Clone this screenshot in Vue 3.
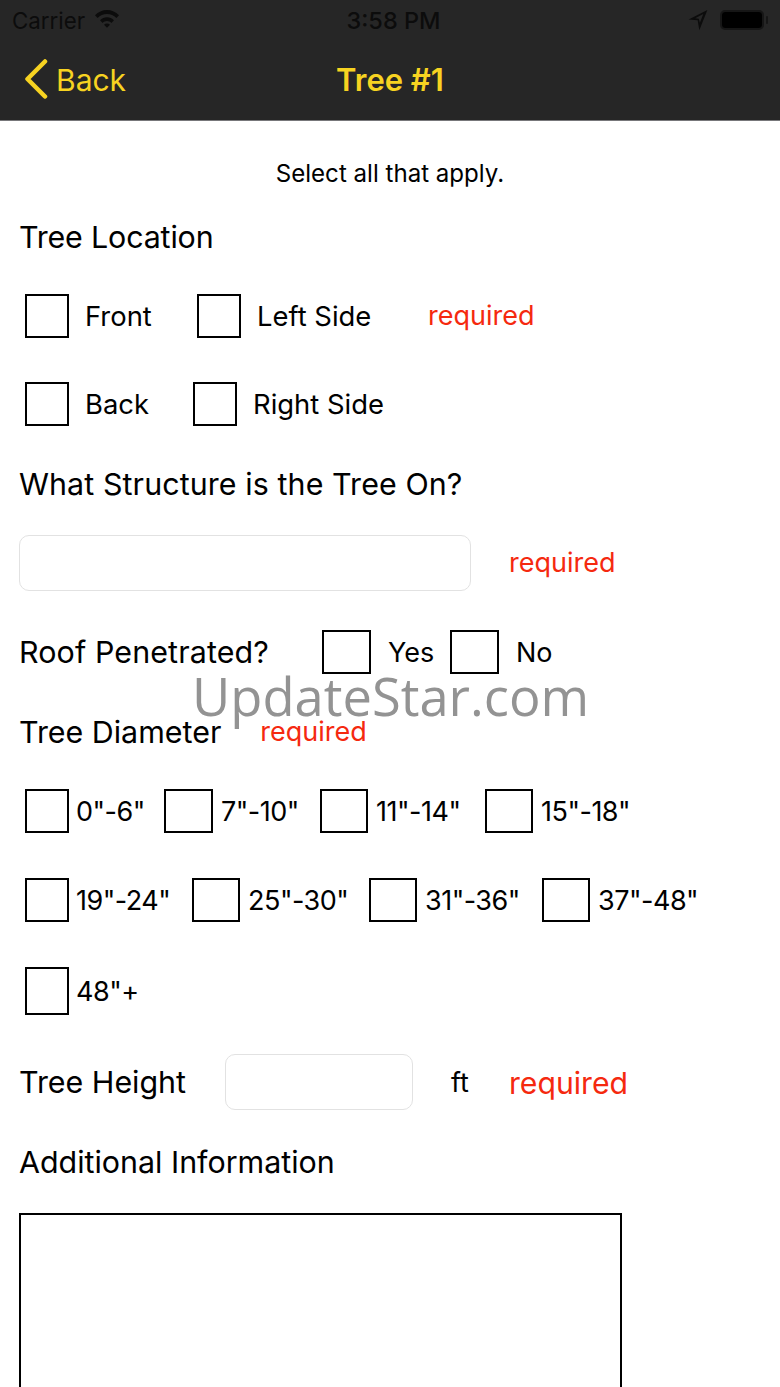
<script setup>
const locationTop = [
  { label: 'Front', width: 172, boxW: 44 },
  { label: 'Left Side', width: 231, boxW: 44 },
]
const locationBottom = [
  { label: 'Back', width: 168, boxW: 44 },
  { label: 'Right Side', width: 235, boxW: 44 },
]
const diameterRows = [
  [
    { label: '0"-6"', width: 139, boxW: 44 },
    { label: '7"-10"', width: 156, boxW: 49 },
    { label: '11"-14"', width: 165, boxW: 48 },
    { label: '15"-18"', width: 170, boxW: 48 },
  ],
  [
    { label: '19"-24"', width: 167, boxW: 44 },
    { label: '25"-30"', width: 177, boxW: 48 },
    { label: '31"-36"', width: 173, boxW: 48 },
    { label: '37"-48"', width: 170, boxW: 48 },
  ],
  [{ label: '48"+', width: 140, boxW: 44, tall: true }],
]
</script>

<template>
  <div class="screen">
    <header class="top">
      <div class="status">
        <div class="status-left">
          <span>Carrier</span>
          <svg class="wifi" viewBox="0 0 26 20" width="26" height="20">
            <path d="M1 7.2C4.2 4 8.4 2 13 2s8.8 2 12 5.2l-2.6 2.7C19.9 7.5 16.6 6 13 6S6.100 7.500 3.600 9.900z" fill="#0c0c0c"/>
            <path d="M6 12.200C7.900 10.300 10.300 9.200 13 9.200s5.100 1.100 7 3l-2.700 2.700C16.200 13.800 14.700 13.100 13 13.100s-3.200.7-4.300 1.800z" fill="#0c0c0c"/>
            <path d="M10 16.800c.8-.8 1.800-1.200 3-1.200s2.200.4 3 1.200L13 19.800z" fill="#0c0c0c"/>
          </svg>
        </div>
        <span class="clock">3:58 PM</span>
        <div class="status-right">
          <svg viewBox="0 0 18 20" width="20" height="22">
            <path d="M17.500 1 .5 9.500l8.200.8 1.500 9z M13.800 4.600 6.400 8.500l3.300.4 1 3.600z" fill="#0c0c0c" fill-rule="evenodd"/>
          </svg>
          <div class="battery"><div class="battery-fill"></div></div>
          <span class="battery-cap"></span>
        </div>
      </div>
      <nav class="nav">
        <div class="back">
          <svg class="chev" viewBox="0 0 24 40" width="24" height="40">
            <path d="M21 2.500 3.500 20 21 37.500" fill="none" stroke="#f7d321" stroke-width="4.500" stroke-linecap="round" stroke-linejoin="round"/>
          </svg>
          <span>Back</span>
        </div>
        <div class="title">Tree #1</div>
      </nav>
    </header>

    <main class="form">
      <p class="hint">Select all that apply.</p>
      <h2 class="heading location-heading">Tree Location</h2>

      <div class="opts first-row">
        <div v-for="o in locationTop" :key="o.label" class="opt" :style="{ width: o.width + 'px' }">
          <span class="box" :style="{ width: o.boxW + 'px' }"></span>
          <span class="opt-label wide">{{ o.label }}</span>
        </div>
        <span class="req">required</span>
      </div>
      <div class="opts second-row">
        <div v-for="o in locationBottom" :key="o.label" class="opt" :style="{ width: o.width + 'px' }">
          <span class="box" :style="{ width: o.boxW + 'px' }"></span>
          <span class="opt-label wide">{{ o.label }}</span>
        </div>
      </div>

      <h2 class="heading structure-heading">What Structure is the Tree On?</h2>
      <div class="structure-row">
        <div class="field structure-field"></div>
        <span class="req">required</span>
      </div>

      <div class="roof-row">
        <span class="heading roof-label">Roof Penetrated?</span>
        <span class="box roof-box"></span>
        <span class="roof-text yes">Yes</span>
        <span class="box roof-box"></span>
        <span class="roof-text">No</span>
      </div>

      <div class="diameter-row">
        <span class="heading">Tree Diameter</span>
        <span class="req diameter-req">required</span>
      </div>

      <div class="diameter-list">
        <div v-for="(row, i) in diameterRows" :key="i" class="opts diameter-opts">
          <div v-for="o in row" :key="o.label" class="opt tight" :style="{ width: o.width + 'px' }">
            <span class="box" :class="{ tall: o.tall }" :style="{ width: o.boxW + 'px' }"></span>
            <span class="opt-label">{{ o.label }}</span>
          </div>
        </div>
      </div>

      <div class="height-row">
        <span class="heading height-label">Tree Height</span>
        <div class="field height-field"></div>
        <span class="ft">ft</span>
        <span class="req big">required</span>
      </div>

      <h2 class="heading info-heading">Additional Information</h2>
      <div class="textarea"></div>
    </main>

    <div class="watermark">UpdateStar.com</div>
  </div>
</template>

<style>
html, body { margin: 0; background: #fff; }
</style>

<style scoped>
.screen {
  position: relative;
  width: 780px;
  height: 1387px;
  overflow: hidden;
  background: #fff;
  color: #000;
  font-family: Inter, "Liberation Sans", sans-serif;
}
.top {
  height: 120px;
  background: #262626;
  border-bottom: 1px solid #77777a;
  display: flex;
  flex-direction: column;
}
.status {
  height: 40px;
  display: flex;
  align-items: center;
  justify-content: space-between;
  position: relative;
  padding: 0 12px;
  color: #0c0c0c;
  font-size: 22.3px;
}
.status-left { display: flex; align-items: center; gap: 9px; }
.wifi { margin-top: -4px; }
.clock {
  position: absolute;
  left: 0;
  right: 0;
  text-align: center;
  font-size: 23.5px;
  font-weight: 500;
  margin-left: 7px;
}
.status-right { display: flex; align-items: center; gap: 12px; }
.battery {
  width: 44px;
  height: 20px;
  border: 2px solid #161616;
  border-radius: 5px;
  box-sizing: border-box;
  margin-right: -10px;
}
.battery-fill { width: 100%; height: 100%; background: #000; border-radius: 3px; }
.battery-cap { width: 2px; height: 8px; background: #161616; border-radius: 1px; }
.nav {
  height: 80px;
  position: relative;
  display: flex;
  align-items: center;
  color: #f7d321;
}
.back {
  display: flex;
  align-items: center;
  gap: 8px;
  padding-left: 24px;
  font-size: 30px;
}
.chev { margin-top: -2px; }
.title {
  position: absolute;
  left: 0;
  right: 0;
  top: 20px;
  text-align: center;
  font-size: 31px;
  line-height: 40px;
  font-weight: 600;
}
.form { padding: 0 0 0 19px; display: flex; flex-direction: column; align-items: flex-start; }
.hint {
  margin: 39px 0 0;
  width: 742px;
  text-align: center;
  font-size: 24.1px;
  line-height: 28px;
}
.heading {
  margin: 0;
  font-size: 30.4px;
  font-weight: 400;
  line-height: 36px;
}
.location-heading { margin-top: 31px; letter-spacing: -0.15px; }
.opts { display: flex; align-items: center; padding-left: 6px; }
.first-row { margin-top: 39px; }
.second-row { margin-top: 44px; }
.opt { display: flex; align-items: center; flex: none; }
.box {
  flex: none;
  display: block;
  height: 44px;
  box-sizing: border-box;
  border: 2px solid #000;
}
.box.tall { height: 48px; }
.opt-label {
  font-size: 27px;
  margin-left: 7px;
  padding-top: 2px;
  line-height: 32px;
  letter-spacing: -0.5px;
}
.tight:nth-child(n + 2) .opt-label { margin-left: 8px; }
.opt-label.wide { font-size: 27.4px; margin-left: 16px; padding-top: 0; letter-spacing: 0; }
.req { color: #f5290f; font-size: 27px; line-height: 32px; }
.structure-heading { margin-top: 40px; letter-spacing: 0.1px; }
.structure-row { display: flex; align-items: center; margin-top: 33px; gap: 38px; }
.field {
  box-sizing: border-box;
  height: 56px;
  border: 1px solid #e2e2e2;
  border-radius: 10px;
  background: #fff;
}
.structure-field { width: 452px; }
.roof-row { display: flex; align-items: center; margin-top: 39px; }
.roof-label { width: 303px; flex: none; letter-spacing: 0.12px; }
.roof-box { width: 49px; }
.roof-text { font-size: 27px; margin-left: 17px; }
.yes { width: 62px; flex: none; }
.diameter-row { display: flex; align-items: center; margin-top: 40px; }
.diameter-req { margin-left: 39px; }
.diameter-list { display: flex; flex-direction: column; margin-top: 39px; gap: 45px; }
.height-row { display: flex; align-items: center; margin-top: 39px; }
.height-label { width: 206px; flex: none; }
.height-field { width: 188px; flex: none; }
.ft { font-size: 27px; margin-left: 38px; width: 58px; flex: none; }
.req.big { font-size: 30.2px; line-height: 36px; padding-top: 2px; }
.info-heading { margin-top: 34px; }
.textarea {
  box-sizing: border-box;
  margin-top: 33px;
  width: 603px;
  height: 240px;
  border: 2px solid #000;
  flex: none;
}
.watermark {
  position: absolute;
  left: 192px;
  top: 662px;
  font-family: "Open Sans", "Noto Sans", sans-serif;
  font-weight: 400;
  font-size: 52.5px;
  line-height: 68px;
  color: #939393;
  white-space: nowrap;
}
</style>
